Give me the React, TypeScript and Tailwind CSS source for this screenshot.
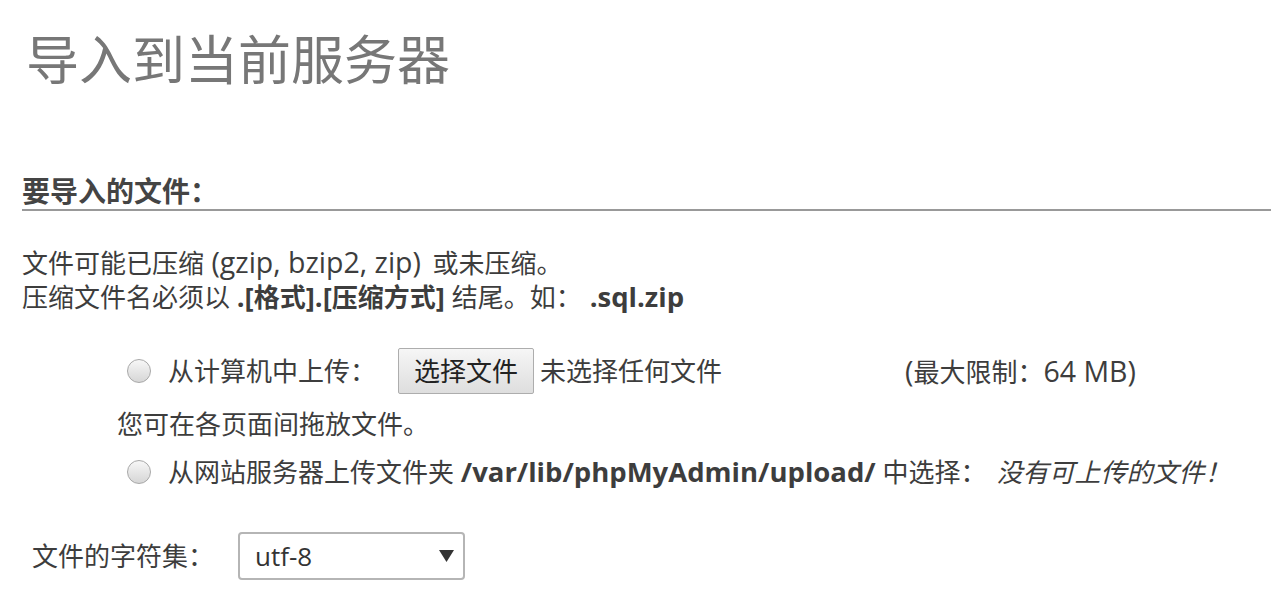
import React from "react";

const font = { fontFamily: '"Open Sans", "Noto Sans CJK SC", sans-serif' };

function Radio() {
  return (
    <span className="inline-block w-[24px] h-[24px] shrink-0 rounded-full border border-[#a8a8a8] bg-linear-to-b from-[#f7f7f7] to-[#d6d6d6]" />
  );
}

// Latin runs are set a little larger, like the YaHei Latin glyphs in the shot
function L({ children, bold = false }: { children: React.ReactNode; bold?: boolean }) {
  return <span className={bold ? "text-[27.5px] font-bold" : "text-[28.5px]"}>{children}</span>;
}

export default function App() {
  return (
    <div className="w-[1271px] h-[607px] overflow-hidden bg-white text-[#3d3d3d] text-[26px]" style={font}>
      <h2 className="pl-[26px] pt-[30px] text-[53px] leading-[60px] text-[#777777] font-normal">
        导入到当前服务器
      </h2>

      <div className="ml-[22px] mt-[83px]">
        <div className="h-[38px] border-b-2 border-[#999999] text-[28px] leading-[36px] font-bold text-[#444444]">
          要导入的文件：
        </div>

        <div className="mt-[34px] leading-[34px]">
          <p>
            文件可能已压缩<L> (gzip, bzip2, zip) </L>
            <span className="ml-[4px]">或未压缩。</span>
          </p>
          <p>
            压缩文件名必须以 <L bold>.[</L><b>格式</b><L bold>].[</L><b>压缩方式</b><L bold>]</L> 结尾。如：
            <span className="ml-[8px]">
              <L bold>.sql.zip</L>
            </span>
          </p>
        </div>
      </div>

      <div className="mt-[34px] flex items-center h-[46px] pl-[127px]">
        <Radio />
        <span className="ml-[17px] w-[230px] leading-[34px]">从计算机中上传：</span>
        <button className="h-[46px] w-[136px] rounded-[2px] border border-[#adadad] bg-linear-to-b from-[#f6f6f6] to-[#dedede] text-[26px] leading-[34px] text-[#222]">
          选择文件
        </button>
        <span className="ml-[6px] w-[365px] leading-[34px]">未选择任何文件</span>
        <span className="leading-[34px]">
          <L>(</L>最大限制：<L>64 MB)</L>
        </span>
      </div>

      <p className="mt-[13px] pl-[117px] leading-[34px]">您可在各页面间拖放文件。</p>

      <div className="mt-[14px] flex items-center h-[34px] pl-[127px]">
        <Radio />
        <span className="ml-[17px] leading-[34px] whitespace-nowrap">
          从网站服务器上传文件夹 <L bold>/var/lib/phpMyAdmin/upload/</L> 中选择：
          <i className="ml-[10px]">没有可上传的文件！</i>
        </span>
      </div>

      <div className="mt-[43px] flex items-center pl-[32px]">
        <span className="w-[206px] leading-[34px]">文件的字符集：</span>
        <div className="flex items-center justify-between w-[227px] h-[48px] rounded-[4px] border-2 border-[#b5b5b5] pl-[15px] pr-[9px] text-[#333]">
          <span className="leading-[34px]">utf-8</span>
          <svg width="15" height="12" viewBox="0 0 15 12">
            <path d="M0 0 H15 L7.5 12 Z" fill="#333" />
          </svg>
        </div>
      </div>
    </div>
  );
}
